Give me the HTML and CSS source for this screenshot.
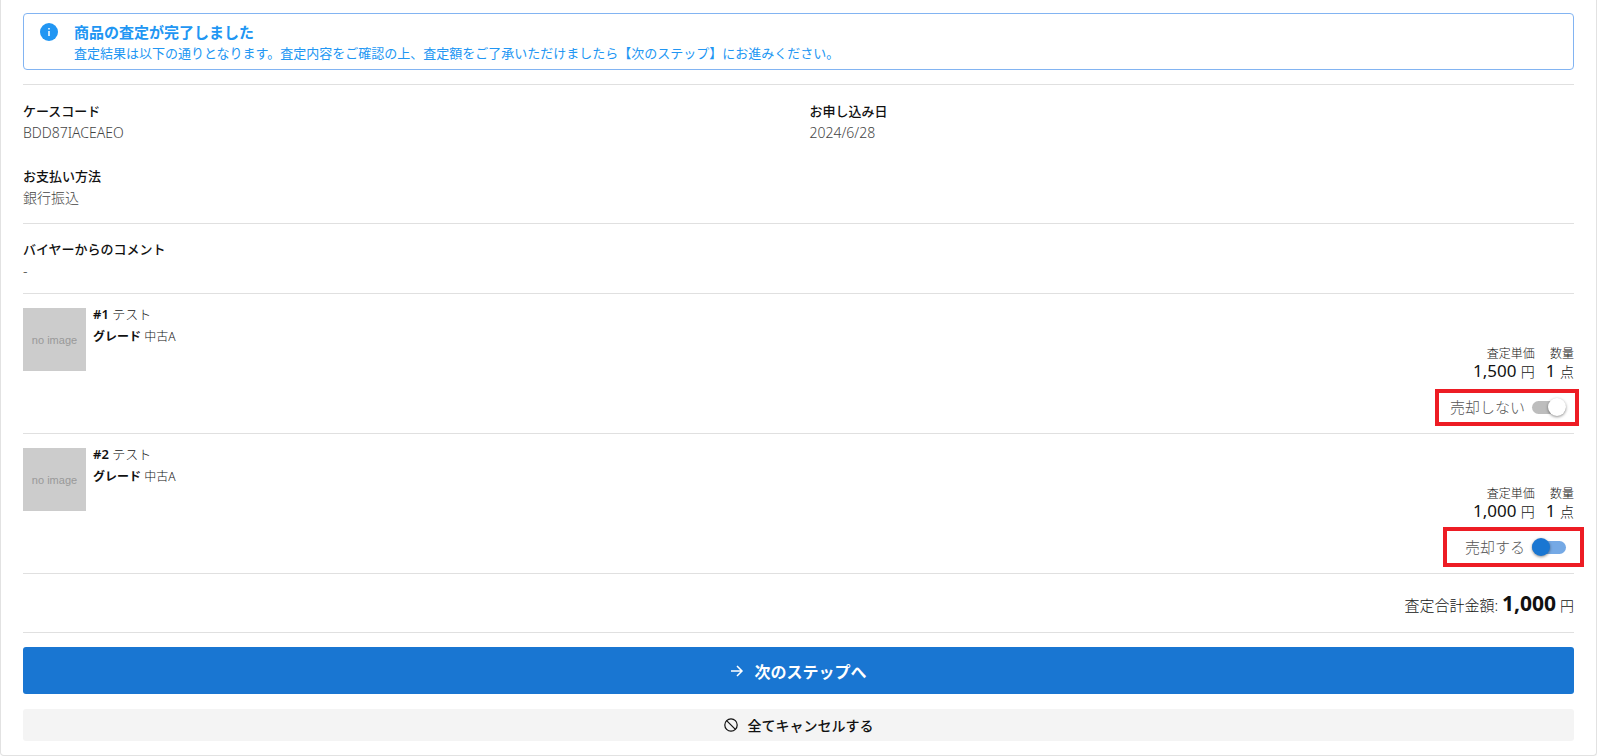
FILE: index.html
```html
<!DOCTYPE html>
<html lang="ja">
<head>
<meta charset="utf-8">
<title>査定結果</title>
<link rel="stylesheet" href="styles.css">
</head>
<body>
<main class="card">
  <section class="alert">
    <svg class="alert-icon" viewBox="0 0 18 18" aria-hidden="true"><circle cx="9" cy="9" r="9" fill="#2196f3"/><path d="M9 8v5M9 5v1.5" stroke="#fff" stroke-width="1.5"/></svg>
    <div>
      <h1 class="alert-title">商品の査定が完了しました</h1>
      <p class="alert-text">査定結果は以下の通りとなります。査定内容をご確認の上、査定額をご了承いただけましたら【次のステップ】にお進みください。</p>
    </div>
  </section>

  <dl class="details">
    <div><dt>ケースコード</dt><dd>BDD87IACEAEO</dd></div>
    <div><dt>お申し込み日</dt><dd>2024/6/28</dd></div>
    <div><dt>お支払い方法</dt><dd>銀行振込</dd></div>
  </dl>

  <dl class="details comment">
    <div><dt>バイヤーからのコメント</dt><dd>-</dd></div>
  </dl>

  <article class="item">
    <div class="thumb">no image</div>
    <div class="info">
      <p class="name"><b>#1</b> テスト</p>
      <p class="grade"><b>グレード</b> 中古A</p>
    </div>
    <div class="result">
      <div class="stats">
        <div><span class="stat-label">査定単価</span><span class="stat-value">1,500 <small>円</small></span></div>
        <div><span class="stat-label">数量</span><span class="stat-value">1 <small>点</small></span></div>
      </div>
      <div class="toggle">
        <label for="sell1">売却しない</label>
        <input class="switch" type="checkbox" role="switch" id="sell1">
        <span class="mark mark-off"></span>
      </div>
    </div>
  </article>

  <article class="item">
    <div class="thumb">no image</div>
    <div class="info">
      <p class="name"><b>#2</b> テスト</p>
      <p class="grade"><b>グレード</b> 中古A</p>
    </div>
    <div class="result">
      <div class="stats">
        <div><span class="stat-label">査定単価</span><span class="stat-value">1,000 <small>円</small></span></div>
        <div><span class="stat-label">数量</span><span class="stat-value">1 <small>点</small></span></div>
      </div>
      <div class="toggle">
        <label for="sell2">売却する</label>
        <input class="switch" type="checkbox" role="switch" id="sell2" checked>
        <span class="mark mark-on"></span>
      </div>
    </div>
  </article>

  <p class="total">査定合計金額: <strong>1,000</strong> <small>円</small></p>

  <div class="actions">
    <button class="btn next" type="button">
      <svg width="14" height="14" viewBox="0 0 14 14" fill="none" stroke="currentColor" stroke-width="1.5" aria-hidden="true"><path d="M1 7h11M7 2l5 5-5 5"/></svg>
      次のステップへ
    </button>
    <button class="btn cancel" type="button">
      <svg width="14" height="14" viewBox="0 0 14 14" fill="none" stroke="currentColor" stroke-width="1.2" aria-hidden="true"><circle cx="7" cy="7" r="6.2"/><path d="M2.6 2.6l8.8 8.8"/></svg>
      全てキャンセルする
    </button>
  </div>
</main>
</body>
</html>
```
FILE: styles.css
```css
* { box-sizing: border-box; }

body {
  margin: 0 3px 0 0;
  background: #fff;
  color: #111;
  font-family: "Noto Sans", "Noto Sans CJK JP", sans-serif;
  font-size: 13px;
  line-height: 20px;
}

h1, p, dl, dd { margin: 0; }

.card {
  padding: 13px 22px 14px;
  border: 1px solid #e2e2e2;
  border-top: 0;
  border-radius: 0 0 4px 4px;
  box-shadow: 1px 0 1px #f0f0f0;
}

.alert {
  display: flex;
  gap: 16px;
  margin-bottom: 14px;
  padding: 7px 16px 6px;
  border: 1px solid #82b4f2;
  border-radius: 4px;
  color: #2196f3;
}

.alert-icon { width: 18px; height: 18px; margin-top: 2px; }
.alert-title { font-size: 15px; line-height: 22px; font-weight: 700; }

.details {
  display: grid;
  grid-template-columns: 1fr 1fr;
  gap: 22px;
  padding: 15px 0;
  border-top: 1px solid #e0e0e0;
}

.details dt { line-height: 22px; font-weight: 500; }
.details dd { font-size: 14px; line-height: 21px; font-weight: 300; color: #444; }
.details.comment { padding: 14px 0 12px; }

.item {
  display: flex;
  gap: 7px;
  padding: 14px 0 16px;
  border-top: 1px solid #e0e0e0;
}

.thumb {
  flex: none;
  display: grid;
  place-items: center;
  width: 63px;
  height: 63px;
  background: #ccc;
  color: #999;
  font: 11px "Liberation Sans", sans-serif;
}

.info { flex: 1; }
.name { line-height: 12px; margin-bottom: 10px; font-weight: 300; }
.grade { font-size: 12px; line-height: 14px; font-weight: 300; }
.info b { font-weight: 600; }

.result { padding-top: 39px; }
.stats { display: flex; justify-content: flex-end; gap: 11px; text-align: right; }
.stat-label, .stat-value { display: block; }
.stat-label { font-size: 12px; line-height: 14px; font-weight: 300; }
.stat-value { font-size: 17px; line-height: 20px; }
small { font-size: 14px; line-height: 1; font-weight: 300; }

.toggle {
  position: relative;
  display: flex;
  justify-content: flex-end;
  align-items: center;
  gap: 7px;
  margin-top: 16px;
  padding-right: 8px;
  font-size: 15px;
  font-weight: 300;
  color: #555;
}

.switch {
  appearance: none;
  display: flex;
  align-items: center;
  justify-content: flex-end;
  width: 34px;
  height: 13px;
  margin: 0;
  border-radius: 7px;
  background: #bdbdbd;
}

.switch::before {
  content: "";
  flex: none;
  width: 18px;
  height: 18px;
  border-radius: 50%;
  background: #fff;
  box-shadow: 0 1px 3px rgb(0 0 0 / 45%);
}

.switch:checked { justify-content: flex-start; background: #75a9e5; }
.switch:checked::before { background: #1976d2; }

.mark { position: absolute; border: 4px solid #ed1c24; pointer-events: none; }
.mark-off { top: -8px; right: -5px; width: 144px; height: 37px; }
.mark-on { top: -10px; right: -10px; width: 141px; height: 40px; }

.total {
  padding: 17px 0 12px;
  border-top: 1px solid #e0e0e0;
  border-bottom: 1px solid #e0e0e0;
  font-size: 15px;
  line-height: 29px;
  font-weight: 300;
  text-align: right;
}

.total strong { font-size: 21px; line-height: 1; font-weight: 700; }

.actions { display: grid; gap: 15px; padding-top: 14px; }

.btn {
  display: flex;
  justify-content: center;
  align-items: center;
  gap: 10px;
  border: 0;
  border-radius: 3px;
  font-family: inherit;
}

.next { height: 47px; background: #1976d2; color: #fff; font-size: 16px; font-weight: 700; }
.cancel { height: 32px; background: #f4f4f4; color: #111; font-size: 14px; font-weight: 500; }
```
